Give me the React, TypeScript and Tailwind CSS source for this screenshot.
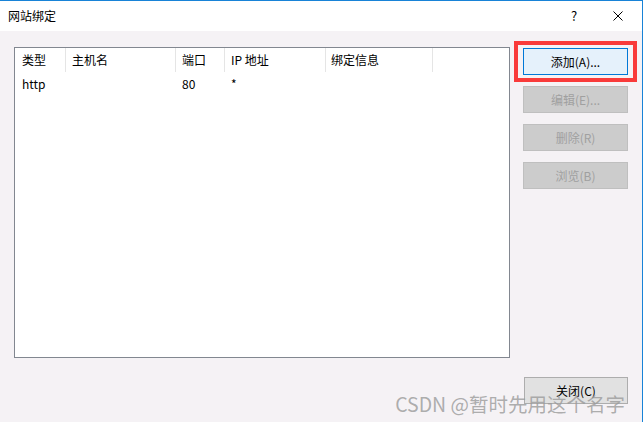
import React from 'react';

const columns = [
  { title: '类型', width: 'w-[51px]', pad: 'pl-[7px]' },
  { title: '主机名', width: 'w-[110px]', pad: 'pl-[6px]' },
  { title: '端口', width: 'w-[49px]', pad: 'pl-[6px]' },
  { title: 'IP 地址', width: 'w-[101px]', pad: 'pl-[6px]' },
  { title: '绑定信息', width: 'w-[107px]', pad: 'pl-[5px]' },
];

const bindings = [{ type: 'http', host: '', port: '80', ip: '*', info: '' }];

const DisabledButton = ({ label }: { label: string }) => (
  <button
    disabled
    className="w-[105px] h-[27px] bg-[#cccccc] border border-[#bfbfbf] text-[#a0a0a0] text-[12px]"
  >
    {label}
  </button>
);

const App = () => {
  return (
    <div
      className="relative w-[643px] h-[422px] bg-[#f5f2f5] border-t border-r border-[#1883d7] overflow-hidden text-[12px] text-black"
      style={{ fontFamily: '"Microsoft YaHei UI", "Noto Sans CJK SC", sans-serif' }}
    >
      {/* title bar */}
      <div className="h-[30px] bg-white flex items-center pl-[8px]">
        <span className="flex-1">网站绑定</span>
        <span className="w-[10px] text-[13px] mr-[32px]">?</span>
        <svg width="10" height="10" viewBox="0 0 10 10" className="mr-[19px]">
          <path d="M0.5 0.5 L9.5 9.5 M9.5 0.5 L0.5 9.5" stroke="#000" strokeWidth="1" />
        </svg>
      </div>

      <div className="flex pl-[14px] pt-[16px]">
        {/* bindings list */}
        <div className="w-[496px] h-[311px] bg-white border border-[#828790]">
          <div className="flex h-[24px] items-center">
            {columns.map((col) => (
              <div
                key={col.title}
                className={`${col.width} ${col.pad} h-full flex items-center border-r border-[#e5e5e5]`}
              >
                {col.title}
              </div>
            ))}
          </div>
          {bindings.map((b, i) => (
            <div key={i} className="flex h-[24px] items-center">
              <div className="w-[51px] pl-[7px]">{b.type}</div>
              <div className="w-[110px] pl-[6px]">{b.host}</div>
              <div className="w-[49px] pl-[6px]">{b.port}</div>
              <div className="w-[101px] pl-[6px]">{b.ip}</div>
              <div className="w-[107px] pl-[5px]">{b.info}</div>
            </div>
          ))}
        </div>

        {/* action buttons */}
        <div className="ml-[13px] pt-[1px] flex flex-col gap-[11px]">
          <div className="relative">
            <button className="w-[105px] h-[27px] bg-[#e5f1fb] border border-[#0078d7] text-[12px]">
              添加(A)...
            </button>
            <div className="absolute -left-[9px] -top-[7px] w-[123px] h-[41px] border-[4px] border-[#f93a3a]" />
          </div>
          <DisabledButton label="编辑(E)..." />
          <DisabledButton label="删除(R)" />
          <DisabledButton label="浏览(B)" />
        </div>
      </div>

      <div className="flex justify-end pr-[14px] mt-[19px]">
        <button className="w-[104px] h-[27px] bg-[#e1e1e1] border border-[#adadad] text-[12px]">
          关闭(C)
        </button>
      </div>

      {/* watermark */}
      <div className="absolute right-[17px] top-[393px] text-[19.5px] leading-[19px] text-[#9a9a9a]/80 whitespace-nowrap pointer-events-none">
        CSDN @暂时先用这个名字
      </div>
    </div>
  );
};

export default App;
